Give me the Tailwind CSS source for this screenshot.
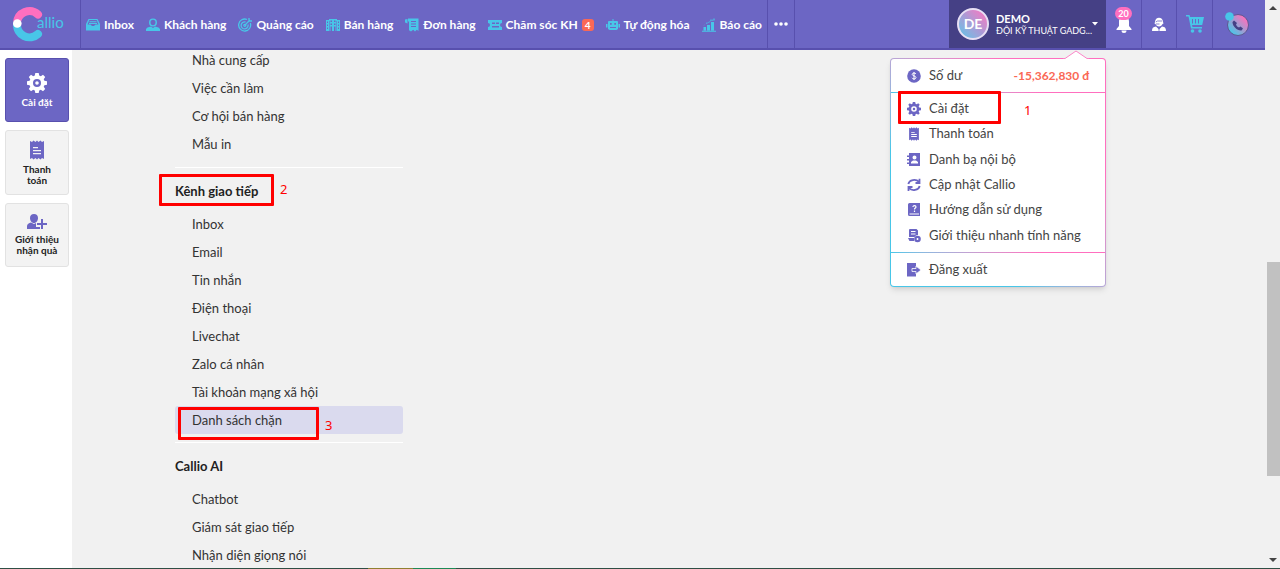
<!DOCTYPE html>
<html lang="vi">
<head>
<meta charset="utf-8">
<meta name="viewport" content="width=device-width, initial-scale=1">
<title>Callio - Cài đặt</title>
<script src="https://cdn.jsdelivr.net/npm/@tailwindcss/browser@4"></script>
</head>
<body class="h-screen overflow-hidden bg-[#f1f1f1] font-['Lato','Noto_Sans',sans-serif] text-[13px] leading-4 text-[#333]">
<svg class="absolute size-0" aria-hidden="true">
  <defs>
    <linearGradient id="pinkblue" x1="1" y1="0" x2="0" y2="1"><stop offset=".2" stop-color="#f275bf"/><stop offset=".85" stop-color="#48c6e8"/></linearGradient>
    <symbol id="gear" viewBox="0 0 20 20"><path fill-rule="evenodd" d="M8.300 0h3.400l.5 2.600 1.600.7L16 1.800 18.200 4l-1.500 2.200.7 1.600 2.600.5v3.400l-2.600.5-.7 1.600 1.500 2.200-2.200 2.200-2.200-1.500-1.600.7-.5 2.600H8.300l-.5-2.600-1.600-.7L4 18.200 1.800 16l1.500-2.200-.7-1.600L0 11.700V8.300l2.600-.5.7-1.600L1.800 4 4 1.800l2.200 1.500 1.600-.7zM10 6a4 4 0 1 0 0 8 4 4 0 0 0 0-8zm0 2.200a1.800 1.800 0 1 1 0 3.600 1.800 1.800 0 0 1 0-3.600z"/></symbol>
    <symbol id="bill" viewBox="0 0 16 20"><path fill-rule="evenodd" d="M1 1l2 1 1.500-1.500L6.500 2 8 .5 9.500 2l2-1.500L13 2l2-1v18l-2-1-1.500 1.500-2-1.500L8 19.500 6.500 18l-2 1.500L3 18l-2 1zM4 7h5v1.300H4zm0 3h8v1.300H4zm0 3h8v1.300H4z"/></symbol>
  </defs>
</svg>
<div class="flex h-full flex-col">
<div class="flex min-h-0 grow">
  <div class="flex min-w-0 grow flex-col">
    <header class="relative z-20 flex h-[50px] shrink-0 border-b-2 border-[#5850ae] bg-[#6c66c4] text-xs font-bold text-white">
      <a href="#" aria-label="Callio" class="flex w-[81px] shrink-0 items-center border-r border-[#5850ae] pl-[13px]">
        <svg class="h-9 w-14" viewBox="0 0 56 36">
          <path d="M25 8.500A12.500 12.500 0 0 0 4 17" fill="none" stroke="#ff6fbf" stroke-width="8" stroke-linecap="round"/>
          <path d="M4 18a12.500 12.500 0 0 0 21 10" fill="none" stroke="#48c6e8" stroke-width="8" stroke-linecap="round"/>
          <circle cx="4.300" cy="17.500" r="4.300" fill="#fff"/>
          <text x="24" y="22" font-family="Lato" font-size="15" font-weight="400" fill="#48c6e8">allio</text>
        </svg>
      </a>
      <nav class="flex items-center gap-3 whitespace-nowrap border-r border-[#5850ae] px-[5px] pt-0.5">
        <a href="#" class="flex items-center gap-1"><svg class="size-3.5 fill-[#48c6e8]" viewBox="0 0 14 14"><path d="M2.500 1h9L14 6v6.500H0V6zm.8 1L1.500 6.500H4.500L6 8h2l1.500-1.500h3L10.700 2z"/><path d="M3.500 3.300h7v1h-7zM3 5h8v1H3z"/></svg>Inbox</a>
        <a href="#" class="flex items-center gap-1"><svg class="size-3.5 fill-[#48c6e8]" viewBox="0 0 14 14"><path fill-rule="evenodd" d="M7 .5a3.500 3.500 0 0 1 0 8 3.500 3.500 0 0 1 0-8zm0 1.200a2.500 2.500 0 0 0-2.500 2.500C4.500 6 5.500 7.200 7 7.200S9.500 6 9.500 4.200A2.500 2.500 0 0 0 7 1.700z"/><path d="M0 13v-2l1.500-1.500L5 8.500 7 10l2-1.500 3.500 1L14 11v2z"/></svg>Khách hàng</a>
        <a href="#" class="flex items-center gap-1"><svg class="size-3.5" viewBox="0 0 14 14" fill="none" stroke="#48c6e8" stroke-width="1.300"><path d="M12.300 5A6 6 0 1 1 9 1.500"/><path d="M10 6.500A3.500 3.500 0 1 1 7.500 4"/><circle cx="6.800" cy="7.300" r="1"/><path d="M7 7l5-5M11 0v3h3"/></svg>Quảng cáo</a>
        <a href="#" class="flex items-center gap-1"><svg class="size-3.5 fill-[#48c6e8]" viewBox="0 0 14 14"><path fill-rule="evenodd" d="M0 2h3V1h8v1h3v11H0zm1 1.500v1.500h1V3.500zm0 3V8h1V6.500zm0 3V11h1V9.500zM4.500 2.500V4H6V2.500zm3.500 0V4h1.500V2.500zM4.500 5.500V7H6V5.500zM8 5.500V7h1.500V5.500zm-3.500 3V13H6V8.500zM8 8.500V13h1.500V8.500zm4-5v1.500h1V3.500zm0 3V8h1V6.500zm0 3V11h1V9.500zM3 3h.5v10H3zm7.500 0h.5v10h-.5z"/></svg>Bán hàng</a>
        <a href="#" class="flex items-center gap-1"><svg class="size-3.5 fill-[#48c6e8]" viewBox="0 0 14 14"><path fill-rule="evenodd" d="M0 1.500L2.500 1v4.500L0 4.500zM3 .5h10.500V13l-1.700-1.200-1.800 1.700-1.800-1.700L6 13.500l-2-1.300V4L3 3zM6 3v1h5V3zm0 2.500v1h5v-1zM6 8v1h5V8z"/></svg>Đơn hàng</a>
        <a href="#" class="flex items-center gap-1"><svg class="size-3.5 fill-[#48c6e8]" viewBox="0 0 14 14"><path fill-rule="evenodd" d="M0 2h14v3a2 2 0 0 0 0 4v3H0V9a2 2 0 0 0 0-4zm4 2.500V6h3V4.500zM8 4.500V6h3V4.500zM4 8v1.500h7V8z"/></svg>Chăm sóc KH<span class="rounded-[3px] bg-[#fa6855] px-[3px] text-[10px] leading-3">4</span></a>
        <a href="#" class="flex items-center gap-1"><svg class="size-3.5 fill-[#48c6e8]" viewBox="0 0 14 14"><path fill-rule="evenodd" d="M6.500 1h1v2H11a1 1 0 0 1 1 1v7l-1.500 1h-7L2 11V4a1 1 0 0 1 1-1h3.500zM4 5v1.700h1.700V5zm4.300 0v1.700H10V5zM4 9v1h6V9zM0 6h1.500v3.500H0zm12.500 0H14v3.500h-1.500z"/></svg>Tự động hóa</a>
        <a href="#" class="flex items-center gap-1"><svg class="size-3.5 fill-[#48c6e8]" viewBox="0 0 14 14"><path d="M1.500 9H4v3.500H1.500zM5 7h3v5.500H5zm4-3h3v8.500H9zM0 12.700h14v1H0z"/><path d="M1 7h1.500v-1H4V4.500h1.500L8 3V1.500h3V.5h2v2h-1.500V3H9L7 5H5.500v1H3l-.8 1.500z" opacity=".6"/></svg>Báo cáo</a>
      </nav>
      <button aria-label="Thêm" class="flex w-[27px] shrink-0 items-center justify-center border-r border-[#5850ae]"><svg class="h-1 w-3.5 fill-white" viewBox="0 0 14 4"><circle cx="2" cy="2" r="1.800"/><circle cx="7" cy="2" r="1.800"/><circle cx="12" cy="2" r="1.800"/></svg></button>

      <div class="relative ml-auto w-[157px] shrink-0">
        <button class="flex h-full w-full items-center gap-[7px] bg-[#454085] pl-2 pr-2 text-left">
          <span class="flex size-8 shrink-0 items-center justify-center rounded-full border-2 border-[#e8e0f5] bg-linear-to-tr from-[#48c6e8] via-[#a99ad6] to-[#ff6fbf] text-sm">DE</span>
          <span class="min-w-0 grow pt-0.5 leading-3"><span class="block text-[11px]">DEMO</span><span class="block whitespace-nowrap text-[9px] font-normal">ĐỘI KỸ THUẬT GADG...</span></span>
          <svg class="h-1 w-1.5 shrink-0 fill-white" viewBox="0 0 6 4"><path d="M0 0h6L3 3.500z"/></svg>
        </button>
        <div class="absolute right-0 top-[58px] w-[216px] rounded-[4px] bg-linear-to-tr from-[#48c6e8] from-30% to-[#ff6fbf] to-75% p-px text-[13px] font-normal text-[#444] shadow-md">
          <svg class="absolute -top-2 right-4 h-2.5 w-7" viewBox="0 0 28 10"><path d="M2 9L14 1l12 8v1H2z" fill="#fff"/><path d="M1 8.500h2L14 1l11 7.500h2" fill="none" stroke="#fb86c8"/></svg>
          <div class="flex h-[33px] items-center gap-2 rounded-t-[3px] bg-white px-4">
            <svg class="size-3.5" viewBox="0 0 14 14"><circle cx="7" cy="7" r="6.800" fill="#6c66c4"/><path d="M9 5C8.500 3.600 5.200 3.700 5.200 5.400S9 6.700 9 8.600 5.300 10.300 5 8.800M7 3v8" fill="none" stroke="#fff"/></svg>
            <span>Số dư</span><span class="ml-auto text-xs font-bold text-[#fa6855]">-15,362,830 đ</span>
          </div>
          <div class="h-px bg-linear-to-r from-[#48c6e8] to-[#ff6fbf] to-70%"></div>
          <div class="bg-white pb-1 pt-[3px]">
            <a href="#" class="relative flex h-[25px] items-center gap-2 pl-4"><svg class="size-3.5 fill-[#6c66c4]"><use href="#gear"/></svg>Cài đặt
              <span class="absolute -top-[5px] left-[7px] h-[33px] w-[103px] rounded-[1px] border-3 border-[#f00]"></span><span class="absolute left-[133px] top-[6px] font-['Noto_Sans',sans-serif] text-[#f00]">1</span></a>
            <a href="#" class="flex h-[26px] items-center gap-2 pl-4"><svg class="size-3.5 fill-[#6c66c4]"><use href="#bill"/></svg>Thanh toán</a>
            <a href="#" class="flex h-[25px] items-center gap-2 pl-4"><svg class="size-3.5 fill-[#6c66c4]" viewBox="0 0 14 14"><path fill-rule="evenodd" d="M2 0h11v13H2v-2H0V9.500h2V7.500H0V6h2V4H0V2.500h2zm5.500 2.500a2 2 0 1 0 0 4 2 2 0 0 0 0-4zM4 10.500h7V9L9 7.500H6L4 9z"/></svg>Danh bạ nội bộ</a>
            <a href="#" class="flex h-[25px] items-center gap-2 pl-4"><svg class="size-3.5" viewBox="0 0 14 14" fill="none" stroke="#6c66c4" stroke-width="1.800"><path d="M1.300 6A6 5 0 0 1 12 4M12.700 8A6 5 0 0 1 2 10M12.500.8V5H8.500M1.500 13V9h4"/></svg>Cập nhật Callio</a>
            <a href="#" class="flex h-[26px] items-center gap-2 pl-4"><svg class="size-3.5" viewBox="0 0 14 14"><path fill="#6c66c4" fill-rule="evenodd" d="M2.500 0H13v13H2.500A1.500 1.500 0 0 1 1 11.500v-10A1.500 1.500 0 0 1 2.500 0zM2.500 10.500v1H12v-1z"/><path d="M6 4c0-2 3-1.900 3 0C9 5.200 7.500 5 7.500 6.500M7.500 7.500V9" fill="none" stroke="#fff" stroke-width="1.200"/></svg>Hướng dẫn sử dụng</a>
            <a href="#" class="flex h-[25px] items-center gap-2 pl-4"><svg class="size-3.5" viewBox="0 0 14 14"><path fill="#6c66c4" fill-rule="evenodd" d="M2.500 0h7L11 1.500V6a4 4 0 0 0-3.500 2H2V1zM4 2v1h4.500V2zm0 2.500v1h4.500v-1zM1 9h6v3H2.500z"/><circle cx="10.500" cy="10" r="3.300" fill="#6c66c4"/><path d="M9.500 10h2M10.500 9v2" stroke="#fff"/></svg>Giới thiệu nhanh tính năng</a>
          </div>
          <div class="h-px bg-linear-to-r from-[#48c6e8] to-[#ff6fbf] to-70%"></div>
          <div class="rounded-b-[3px] bg-white">
            <a href="#" class="flex h-[33px] items-center gap-2 pl-4"><svg class="size-3.5" viewBox="0 0 14 14"><path fill="#6c66c4" d="M0 0h9v13.500H0z"/><path d="M5 5.500h4V3l5 4-5 4V8.500H5z" fill="#6c66c4" stroke="#fff" stroke-width=".8"/></svg>Đăng xuất</a>
          </div>
        </div>
      </div>
      <button aria-label="Thông báo" class="relative flex w-9 shrink-0 items-center justify-center border-r border-[#5850ae]"><svg class="h-[18px] w-4 fill-white" viewBox="0 0 16 18"><path d="M8 1c3.500 0 5 2.500 5 5.500V11l2.500 3v1H.5v-1L3 11V6.500C3 3.500 4.500 1 8 1zM5.500 15.500h5a2.500 2.500 0 0 1-5 0z"/></svg><span class="absolute top-[7px] rounded-full bg-[#ff6fbf] px-[3px] text-[9px] leading-[13px]">20</span></button>
      <button aria-label="Hỗ trợ" class="flex w-[35px] shrink-0 items-center justify-center border-r border-[#5850ae]"><svg class="size-3.5" viewBox="0 0 14 14"><path d="M3 5C3-.8 11-.8 11 5l.5 1.500L10.500 7C10 8.500 8.500 9.500 7 9.500S4 8.500 3.500 7l-1-.5zM0 14c0-3 1-4 4-4.500l3 3 3-3c3 .5 4 1.500 4 4.500z" fill="#fff"/><path d="M3.800 5L5.500 4H10M4 7h3.500M7 11.500V14" fill="none" stroke="#6c66c4" stroke-width=".8"/></svg></button>
      <button aria-label="Giỏ hàng" class="flex w-9 shrink-0 items-center justify-center border-r border-[#5850ae]"><svg class="size-[18px] fill-[#48c6e8]" viewBox="0 0 18 18"><path fill-rule="evenodd" d="M0 0h3.500l.7 2H18l-1.800 8H6l.5 2H16v1.500H5L2.500 1.500H0zM6 4v4.500h1V4zm3 0v4.500h1V4zm3 0v4.500h1V4z"/><circle cx="6.500" cy="16" r="1.800"/><circle cx="14" cy="16" r="1.800"/></svg></button>
      <button aria-label="Gọi" class="flex w-[52px] shrink-0 items-center justify-center pr-1"><svg class="size-6" viewBox="0 0 24 24"><circle cx="13" cy="13" r="10.500" fill="url(#pinkblue)" stroke="#5d5790"/><path d="M9 8.500L7.500 10c0 4.500 5 9 9 8.500l1.500-2-2.500-2-1.500 1c-1.500-.5-2.500-1.500-3-3l1-1.500z" fill="#454085"/><circle cx="4.500" cy="4.500" r="4.300" fill="#48c6e8"/></svg></button>
    </header>

    <div class="flex min-h-0 grow overflow-hidden">
      <aside class="flex w-[72px] shrink-0 flex-col gap-2 bg-white pl-[5px] pr-1 pt-2 text-center text-[10px] font-bold leading-[11px] text-[#222]">
        <a href="#" class="flex h-16 w-16 flex-col items-center justify-center gap-1 rounded-[3px] border border-[#5850ae] bg-[#6c66c4] text-white"><svg class="size-5 fill-white"><use href="#gear"/></svg>Cài đặt</a>
        <a href="#" class="flex h-[65px] w-16 flex-col items-center justify-center gap-1 rounded-[3px] border border-[#e2e2e2] bg-[#f3f3f3]"><svg class="h-5 w-4 fill-[#6c66c4]"><use href="#bill"/></svg><span>Thanh<br>toán</span></a>
        <a href="#" class="flex h-16 w-16 flex-col items-center justify-center gap-1 rounded-[3px] border border-[#e2e2e2] bg-[#f3f3f3]"><svg class="h-4 w-5 fill-[#6c66c4]" viewBox="0 0 20 16"><path d="M7 0c2.500 0 4 1.500 4 4s-1.500 5-4 5-4-2.500-4-5 1.500-4 4-4zM0 15v-3c0-2 2-3 4-3.500l3 1.500 2-1v4h4v2zM14 5h2v4h4v2h-4v4h-2v-4h-4V9h4z"/></svg><span>Giới thiệu<br>nhận quà</span></a>
      </aside>
      <main class="min-w-0 grow overflow-hidden pl-[103px]">
        <div class="-mt-1 w-[228px]">
          <ul class="border-b border-white pb-[9px]">
            <li><a href="#" class="flex h-7 items-center pl-[17px]">Nhà cung cấp</a></li>
            <li><a href="#" class="flex h-7 items-center pl-[17px]">Việc cần làm</a></li>
            <li><a href="#" class="flex h-7 items-center pl-[17px]">Cơ hội bán hàng</a></li>
            <li><a href="#" class="flex h-7 items-center pl-[17px]">Mẫu in</a></li>
          </ul>
          <h2 class="relative flex h-[42px] items-center pt-1 font-bold text-[#222]">Kênh giao tiếp
            <span class="absolute -left-4 top-[6px] h-8 w-[115px] rounded-[1px] border-3 border-[#f00]"></span><span class="absolute left-[105px] top-[13px] font-['Noto_Sans',sans-serif] font-normal text-[#f00]">2</span></h2>
          <ul class="border-b border-white pb-2">
            <li><a href="#" class="flex h-7 items-center pl-[17px]">Inbox</a></li>
            <li><a href="#" class="flex h-7 items-center pl-[17px]">Email</a></li>
            <li><a href="#" class="flex h-7 items-center pl-[17px]">Tin nhắn</a></li>
            <li><a href="#" class="flex h-7 items-center pl-[17px]">Điện thoại</a></li>
            <li><a href="#" class="flex h-7 items-center pl-[17px]">Livechat</a></li>
            <li><a href="#" class="flex h-7 items-center pl-[17px]">Zalo cá nhân</a></li>
            <li><a href="#" class="flex h-7 items-center pl-[17px]">Tài khoản mạng xã hội</a></li>
            <li><a href="#" class="relative flex h-7 items-center rounded-[3px] bg-[#dadaee] pl-[17px]">Danh sách chặn
              <span class="absolute left-[3px] top-px h-[33px] w-[141px] rounded-[1px] border-3 border-[#f00]"></span><span class="absolute left-[150px] top-[11px] font-['Noto_Sans',sans-serif] text-[#f00]">3</span></a></li>
          </ul>
          <h2 class="flex h-[42px] items-center pt-1 font-bold text-[#222]">Callio AI</h2>
          <ul>
            <li><a href="#" class="flex h-7 items-center pl-[17px]">Chatbot</a></li>
            <li><a href="#" class="flex h-7 items-center pl-[17px]">Giám sát giao tiếp</a></li>
            <li><a href="#" class="flex h-7 items-center pl-[17px]">Nhận diện giọng nói</a></li>
          </ul>
        </div>
      </main>
    </div>
  </div>
  <div class="flex w-[15px] shrink-0 flex-col items-center bg-[#f1f1f1] py-1.5">
    <svg class="h-1 w-2 shrink-0 fill-[#444]" viewBox="0 0 8 4"><path d="M0 4h8L4 0z"/></svg>
    <div class="grow-[252]"></div>
    <div class="ml-0.5 w-[13px] grow-[214] bg-[#c1c1c1]"></div>
    <div class="grow-[82]"></div>
    <svg class="h-1 w-2 shrink-0 fill-[#444]" viewBox="0 0 8 4"><path d="M0 0h8L4 4z"/></svg>
  </div>
</div>
<div class="flex h-px shrink-0 bg-[#2f4f45]"><span class="ml-[368px] w-[45px] bg-[#8f8030]"></span><span class="w-[43px] bg-[#1c8a55]"></span></div>
</div>
</body>
</html>
